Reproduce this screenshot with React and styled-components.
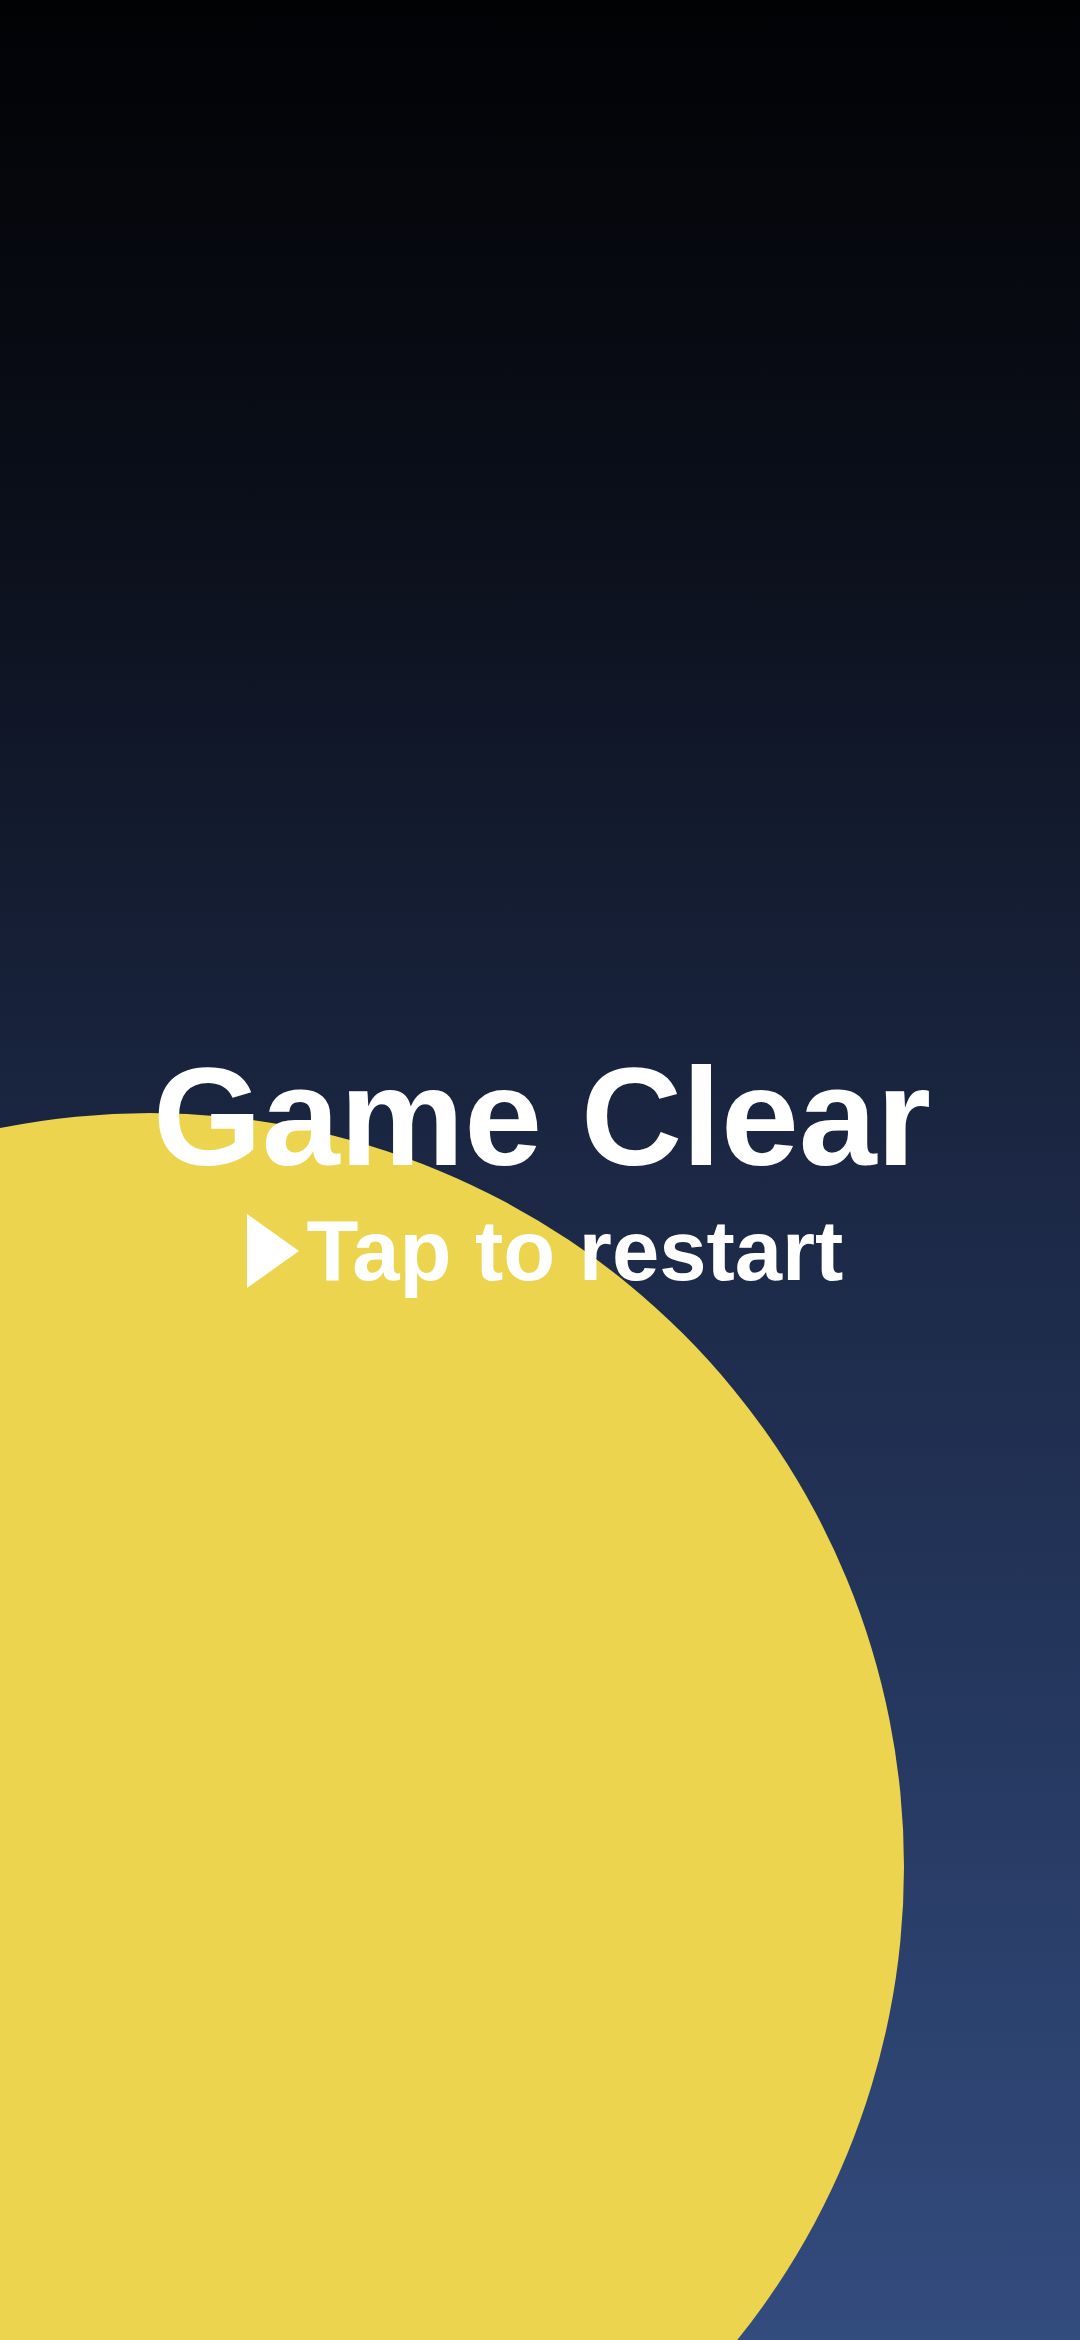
import styled, { createGlobalStyle } from 'styled-components';

const GlobalStyle = createGlobalStyle`
    html, body {
        margin: 0;
        padding: 0;
        background: #020306;
    }

    body {
        font-family: "Liberation Sans", Arial, sans-serif;
    }
`;

const Screen = styled.main`
    position: relative;
    width: 1080px;
    height: 2340px;
    overflow: hidden;
    background: linear-gradient(
        180deg,
        #010204 0%,
        #0b0f1a 22%,
        #1b2744 50%,
        #263961 75%,
        #334c7e 100%
    );
`;

// the yellow ball sits behind the text
const Ball = styled.div`
    position: absolute;
    left: ${p => p.$x - p.$r}px;
    top: ${p => p.$y - p.$r}px;
    width: ${p => p.$r * 2}px;
    height: ${p => p.$r * 2}px;
    border-radius: 50%;
    background: #ecd44f;
`;

const Message = styled.section`
    position: relative;
    z-index: 1;
    display: flex;
    flex-direction: column;
    align-items: center;
    padding-top: 1047px;
    color: #fff;
`;

const Title = styled.h1`
    margin: 0;
    font-size: 140px;
    font-weight: 700;
    line-height: 1;
    padding-left: 4px;
`;

const Restart = styled.button`
    display: flex;
    align-items: center;
    gap: 8px;
    margin-top: 21px;
    padding: 0 0 0 10px;
    border: 0;
    background: none;
    color: #fff;
    font-family: inherit;
    font-size: 85px;
    font-weight: 700;
    line-height: 1;
    cursor: pointer;
`;

const Arrow = styled.span`
    width: 0;
    height: 0;
    border-top: 37px solid transparent;
    border-bottom: 37px solid transparent;
    border-left: 52px solid #fff;
`;

function App() {
    return (
        <>
            <GlobalStyle />
            <Screen>
                <Ball $x={150} $y={1867} $r={754} />
                <Message>
                    <Title>Game Clear</Title>
                    <Restart>
                        <Arrow />
                        Tap to restart
                    </Restart>
                </Message>
            </Screen>
        </>
    );
}

export default App;
